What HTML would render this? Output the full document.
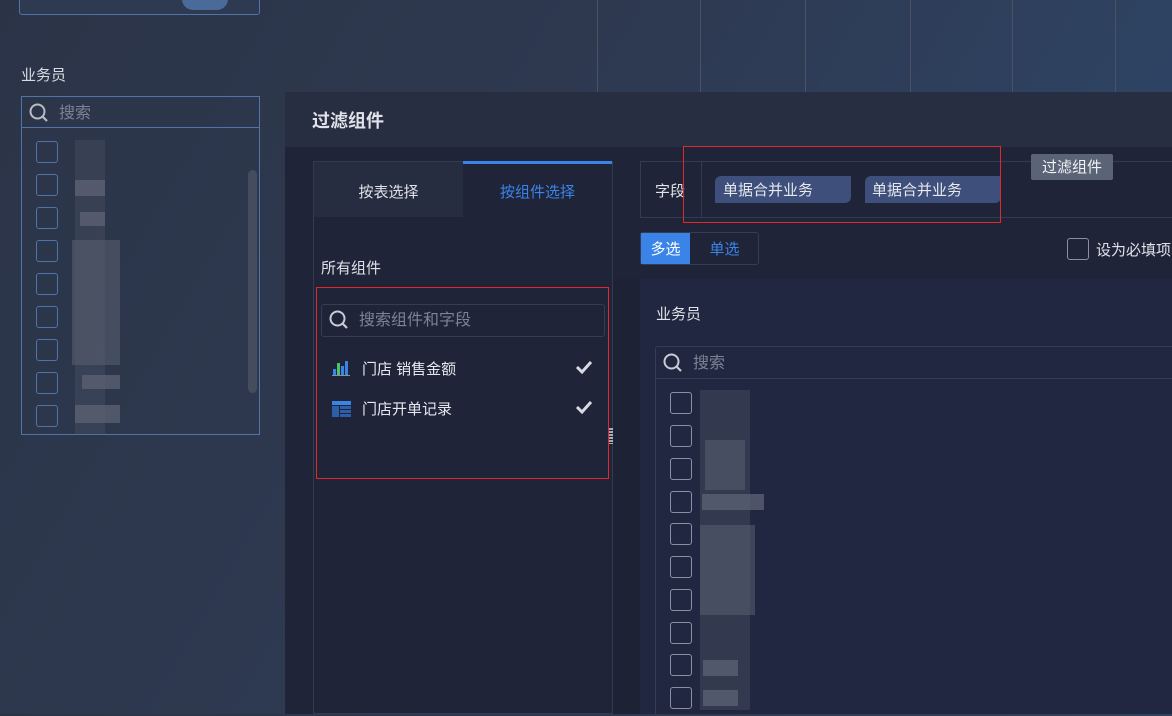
<!DOCTYPE html>
<html><head><meta charset="utf-8"><style>
*{margin:0;padding:0;box-sizing:border-box}
body{width:1172px;height:714px;overflow:hidden;position:relative;font-family:"Liberation Sans","Noto Sans CJK SC",sans-serif;background:linear-gradient(120deg,#2b3447 0%,#2e3a52 45%,#2f4a70 100%);color:#e6e8ee;font-size:15px}
.a{position:absolute}
.t{position:absolute;line-height:20px;margin-top:2px}
.cb{position:absolute;width:22px;height:22px;border:1px solid #8a90a0;border-radius:3px}
.cbl{position:absolute;width:22px;height:22px;border:1px solid #4f74a8;border-radius:3px}
.blur{position:absolute;background:#5d6374;opacity:.75}
.vl{position:absolute;top:0;width:1px;height:92px;background:#4a5263}
</style></head><body>
<div class="vl" style="left:597px"></div><div class="vl" style="left:700px"></div><div class="vl" style="left:805px"></div><div class="vl" style="left:910px"></div><div class="vl" style="left:1012px"></div><div class="vl" style="left:1115px"></div>
<div class="a" style="left:19px;top:-20px;width:241px;height:35px;border:1px solid #4f74a8;border-radius:3px;background:#2d3a52"></div>
<div class="a" style="left:182px;top:-12px;width:46px;height:22px;border-radius:11px;background:#4a6a99"></div>
<div class="t" style="left:21px;top:64px;color:#d8dbe2">业务员</div>
<div class="a" style="left:21px;top:96px;width:239px;height:339px;border:1px solid #4f74a8"></div>
<div class="a" style="left:21px;top:127px;width:239px;height:1px;background:#4f74a8"></div>
<svg class="a" style="left:28px;top:102px" width="22" height="22" viewBox="0 0 22 22"><circle cx="9.5" cy="9.5" r="7" fill="none" stroke="#b8bcc6" stroke-width="2"/><path d="M14.5 14.5L19 19" stroke="#b8bcc6" stroke-width="2.2"/></svg>
<div class="t" style="left:59px;top:102px;color:#7d8394;font-size:16px">搜索</div>
<div class="a" style="left:248px;top:170px;width:9px;height:223px;border-radius:5px;background:#454c5e"></div>
<div class="cbl" style="left:36px;top:141px"></div><div class="cbl" style="left:36px;top:174px"></div><div class="cbl" style="left:36px;top:207px"></div><div class="cbl" style="left:36px;top:240px"></div><div class="cbl" style="left:36px;top:273px"></div><div class="cbl" style="left:36px;top:306px"></div><div class="cbl" style="left:36px;top:339px"></div><div class="cbl" style="left:36px;top:372px"></div><div class="cbl" style="left:36px;top:405px"></div>
<div class="blur" style="left:75px;top:140px;width:30px;height:295px;opacity:.25"></div>
<div class="blur" style="left:75px;top:180px;width:30px;height:16px"></div><div class="blur" style="left:80px;top:212px;width:25px;height:14px"></div><div class="blur" style="left:72px;top:240px;width:48px;height:125px;opacity:.5"></div><div class="blur" style="left:82px;top:375px;width:38px;height:14px"></div><div class="blur" style="left:75px;top:405px;width:45px;height:18px"></div>
<div class="a" style="left:285px;top:92px;width:887px;height:622px;background:#1f2439"></div>
<div class="a" style="left:285px;top:92px;width:887px;height:55px;background:#282e42"></div>
<div class="a" style="left:312px;top:109px;font-size:18px;font-weight:bold;color:#dfe2e8;line-height:24px">过滤组件</div>
<div class="a" style="left:313px;top:161px;width:300px;height:553px;border:1px solid #343b50"></div>
<div class="a" style="left:314px;top:162px;width:149px;height:55px;background:#272d41"></div>
<div class="a" style="left:463px;top:161px;width:149px;height:3px;background:#3a84e8"></div>
<div class="t" style="left:314px;top:181px;width:149px;text-align:center;color:#dfe2e8">按表选择</div>
<div class="t" style="left:463px;top:181px;width:149px;text-align:center;color:#3a84e8">按组件选择</div>
<div class="t" style="left:321px;top:257px;color:#dfe2e8">所有组件</div>
<div class="a" style="left:316px;top:287px;width:293px;height:192px;border:1px solid #e0292b"></div>
<div class="a" style="left:321px;top:304px;width:284px;height:33px;border:1px solid #363d52;border-radius:3px"></div>
<svg class="a" style="left:328px;top:309px" width="22" height="22" viewBox="0 0 22 22"><circle cx="9.5" cy="9.5" r="7" fill="none" stroke="#c8ccd4" stroke-width="2"/><path d="M14.5 14.5L19 19" stroke="#c8ccd4" stroke-width="2.2"/></svg>
<div class="t" style="left:359px;top:309px;color:#7d8394;font-size:16px">搜索组件和字段</div>
<svg class="a" style="left:332px;top:360px" width="18" height="16" viewBox="0 0 18 16"><rect x="1" y="9" width="3" height="6" fill="#3a84e8"/><rect x="5" y="3" width="3" height="12" fill="#4ec26a"/><rect x="9" y="6" width="3" height="9" fill="#3a84e8"/><rect x="13" y="1" width="3" height="14" fill="#3a84e8"/><rect x="0" y="15" width="18" height="1" fill="#8a90a0"/></svg>
<div class="t" style="left:362px;top:358px;color:#e6e8ee">门店 销售金额</div>
<svg class="a" style="left:332px;top:401px" width="19" height="16" viewBox="0 0 19 16"><rect x="0" y="0" width="19" height="4" fill="#3a84e8"/><rect x="0" y="5" width="7" height="11" fill="#2d5fa8"/><rect x="8" y="5" width="11" height="3" fill="#2d5fa8"/><rect x="8" y="9" width="11" height="3" fill="#2d5fa8"/><rect x="8" y="13" width="11" height="3" fill="#2d5fa8"/></svg>
<div class="t" style="left:362px;top:398px;color:#e6e8ee">门店开单记录</div>
<svg class="a" style="left:575px;top:360px" width="18" height="14" viewBox="0 0 18 14"><path d="M2 7L7 12L16 2" fill="none" stroke="#d8dbe2" stroke-width="3"/></svg>
<svg class="a" style="left:575px;top:400px" width="18" height="14" viewBox="0 0 18 14"><path d="M2 7L7 12L16 2" fill="none" stroke="#d8dbe2" stroke-width="3"/></svg>
<div class="a" style="left:609px;top:428px;width:6px;height:16px;background:repeating-linear-gradient(#c8ccd4 0 2px,transparent 2px 3px);opacity:.8"></div>
<div class="a" style="left:613px;top:279px;width:27px;height:435px;background:#1d2235"></div>
<div class="a" style="left:640px;top:161px;width:540px;height:57px;border:1px solid #343b50"></div>
<div class="a" style="left:701px;top:162px;width:1px;height:55px;background:#343b50"></div>
<div class="t" style="left:655px;top:180px;color:#dfe2e8">字段</div>
<div class="a" style="left:715px;top:176px;width:136px;height:27px;background:#3d4f7a;border-radius:6px 0 6px 0;padding-left:8px;line-height:27px;color:#e6e8ee;padding-top:1px">单据合并业务</div>
<div class="a" style="left:865px;top:176px;width:136px;height:27px;background:#3d4f7a;border-radius:6px 0 6px 0;padding-left:7px;line-height:27px;color:#e6e8ee;padding-top:1px">单据合并业务</div>
<div class="a" style="left:683px;top:146px;width:318px;height:77px;border:1px solid #e0292b"></div>
<div class="a" style="left:1031px;top:154px;width:82px;height:26px;background:#5b6476;border-radius:2px;text-align:center;line-height:28px;color:#f0f2f5">过滤组件</div>
<div class="a" style="left:640px;top:232px;width:119px;height:33px;border:1px solid #363d52;border-radius:3px"></div>
<div class="a" style="left:641px;top:233px;width:49px;height:31px;background:#3a84e8;text-align:center;line-height:33px;color:#fff">多选</div>
<div class="a" style="left:690px;top:233px;width:69px;height:31px;text-align:center;line-height:33px;color:#3a84e8">单选</div>
<div class="cb" style="left:1067px;top:238px"></div>
<div class="t" style="left:1096px;top:239px;color:#dfe2e8;white-space:nowrap">设为必填项</div>
<div class="a" style="left:640px;top:279px;width:540px;height:435px;background:#212740"></div>
<div class="t" style="left:656px;top:303px;color:#dfe2e8">业务员</div>
<div class="a" style="left:655px;top:346px;width:530px;height:370px;border:1px solid #363d52;border-radius:3px"></div>
<div class="a" style="left:656px;top:378px;width:520px;height:1px;background:#363d52"></div>
<svg class="a" style="left:662px;top:352px" width="22" height="22" viewBox="0 0 22 22"><circle cx="9.5" cy="9.5" r="7" fill="none" stroke="#c8ccd4" stroke-width="2"/><path d="M14.5 14.5L19 19" stroke="#c8ccd4" stroke-width="2.2"/></svg>
<div class="t" style="left:693px;top:352px;color:#7d8394;font-size:16px">搜索</div>
<div class="cb" style="left:670px;top:392px"></div><div class="cb" style="left:670px;top:425px"></div><div class="cb" style="left:670px;top:458px"></div><div class="cb" style="left:670px;top:491px"></div><div class="cb" style="left:670px;top:523px"></div><div class="cb" style="left:670px;top:556px"></div><div class="cb" style="left:670px;top:589px"></div><div class="cb" style="left:670px;top:622px"></div><div class="cb" style="left:670px;top:654px"></div><div class="cb" style="left:670px;top:687px"></div>
<div class="blur" style="left:700px;top:390px;width:50px;height:320px;opacity:.3"></div>
<div class="blur" style="left:705px;top:440px;width:40px;height:50px;opacity:.5"></div>
<div class="blur" style="left:702px;top:494px;width:62px;height:16px"></div>
<div class="blur" style="left:700px;top:525px;width:55px;height:90px;opacity:.5"></div>
<div class="blur" style="left:703px;top:660px;width:35px;height:16px"></div>
<div class="blur" style="left:703px;top:690px;width:35px;height:16px"></div>
</body></html>
